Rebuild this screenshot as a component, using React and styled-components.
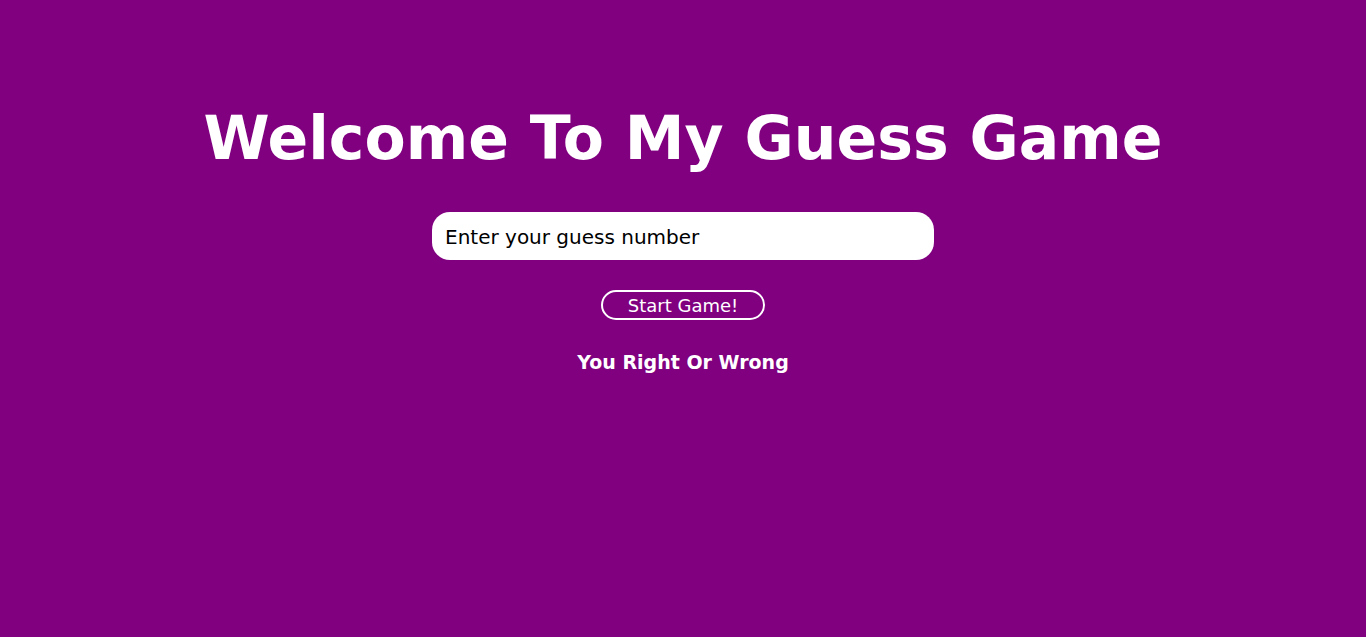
import React from "react";
import styled, { createGlobalStyle } from "styled-components";

const GlobalStyle = createGlobalStyle`
  html, body {
    margin: 0;
    padding: 0;
    background: purple;
    font-family: "DejaVu Sans", Verdana, sans-serif;
  }
`;

function App() {
  return (
    <>
      <GlobalStyle />
      <Container>
        <Title>Welcome To My Guess Game</Title>
        <GuessInput type="text" placeholder="Enter your guess number" />
        <StartButton>Start Game!</StartButton>
        <Result>You Right Or Wrong</Result>
      </Container>
    </>
  );
}

export default App;

const Container = styled.div`
  width: 100vw;
  height: 100vh;
  background: purple;
  display: flex;
  flex-direction: column;
  align-items: center;
  padding-top: 100px;
  box-sizing: border-box;
`;

const Title = styled.h1`
  margin: 0;
  color: white;
  font-size: 60px;
  font-weight: bold;
  line-height: 76px;
`;

const GuessInput = styled.input`
  margin-top: 36px;
  width: 502px;
  height: 48px;
  box-sizing: border-box;
  border: none;
  border-radius: 18px;
  padding: 2px 13px 0;
  font-family: "DejaVu Sans", Verdana, sans-serif;
  font-size: 20px;
  outline: none;
  &::placeholder {
    color: black;
  }
`;

const StartButton = styled.button`
  margin-top: 30px;
  width: 164px;
  height: 30px;
  box-sizing: border-box;
  background: transparent;
  border: 2px solid white;
  border-radius: 15px;
  color: white;
  font-family: "DejaVu Sans", Verdana, sans-serif;
  font-size: 18px;
  cursor: pointer;
`;

const Result = styled.p`
  margin: 31px 0 0;
  color: white;
  font-size: 19px;
  font-weight: bold;
`;
